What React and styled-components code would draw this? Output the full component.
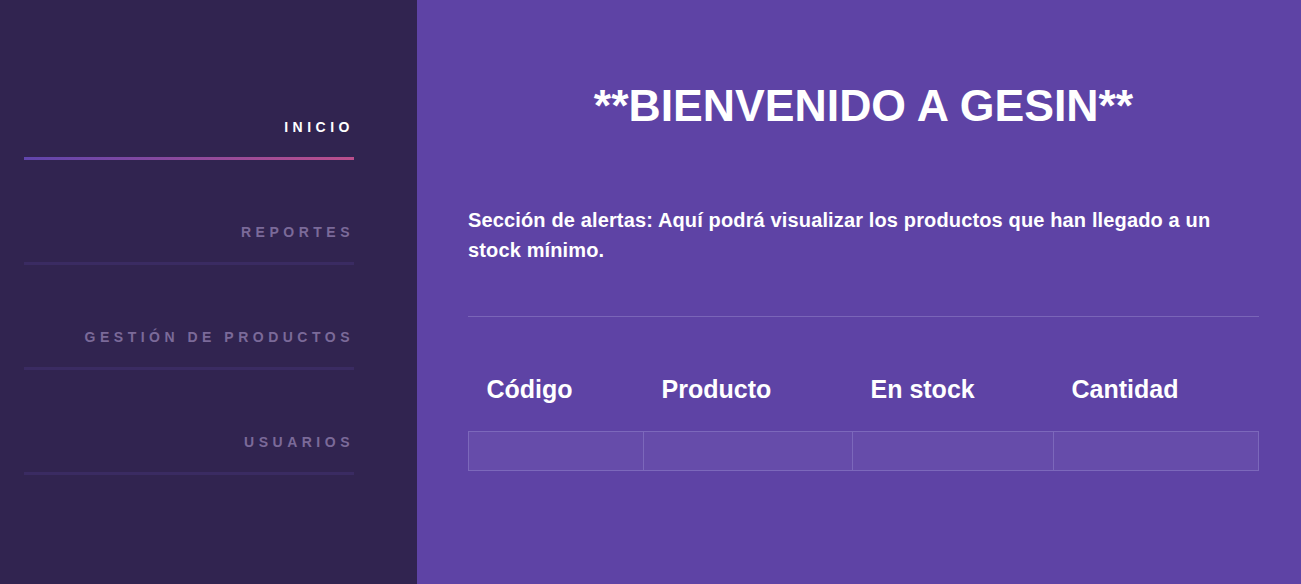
import React from "react";
import styled, { createGlobalStyle } from "styled-components";

const Global = createGlobalStyle`
  html, body { margin: 0; padding: 0; }
  body { font-family: "Liberation Sans", Arial, sans-serif; background: #5e43a5; }
  * { box-sizing: border-box; }
`;

const Layout = styled.div`
  display: flex;
  width: 100%;
  height: 584px;
`;

const Sidebar = styled.aside`
  width: 417px;
  flex: 0 0 417px;
  background: #312450;
  padding: 116px 63px 0 24px;
`;

const NavList = styled.nav`
  display: flex;
  flex-direction: column;
  gap: 61px;
`;

const NavItem = styled.a`
  display: block;
  text-align: right;
  font-size: 14px;
  line-height: 22px;
  font-weight: 700;
  letter-spacing: 4.5px;
  text-transform: uppercase;
  padding: 0 0 19px 0;
  color: ${(p) => (p.$active ? "#ffffff" : "#7b6a99")};
  border-bottom: 3px solid transparent;
  border-image: ${(p) =>
    p.$active
      ? "linear-gradient(90deg, #6045ad, #bb4f8c) 1"
      : "linear-gradient(90deg, #3a2b62, #3a2b62) 1"};
  text-decoration: none;
  cursor: pointer;
`;

const Main = styled.main`
  flex: 1;
  background: #5e43a5;
  padding: 81px 42px 0 51px;
  display: flex;
  flex-direction: column;
  color: #ffffff;
`;

const Title = styled.h1`
  margin: 0;
  text-align: center;
  font-size: 44.6px;
  line-height: 50px;
  font-weight: 700;
`;

const Intro = styled.p`
  margin: 74px 0 0 0;
  font-size: 20px;
  line-height: 30px;
  font-weight: 700;
  letter-spacing: 0.14px;
`;

const Divider = styled.hr`
  margin: 51px 0 0 0;
  border: none;
  height: 1px;
  background: #7a65b8;
`;

const Table = styled.table`
  width: 100%;
  margin-top: 38px;
  border-collapse: collapse;
`;

const HeadCell = styled.th`
  text-align: left;
  font-size: 25px;
  line-height: 29px;
  font-weight: 700;
  padding: 20px 18px 27px 18px;
  color: #ffffff;
`;

const BodyCell = styled.td`
  height: 39px;
  padding: 0 18px;
  background: #664caa;
  border: 1px solid #7c68bb;
`;

const columns = ["Código", "Producto", "En stock", "Cantidad"];
const navItems = ["Inicio", "Reportes", "Gestión de productos", "Usuarios"];

export default function App() {
  return (
    <>
      <Global />
      <Layout>
        <Sidebar>
          <NavList>
            {navItems.map((n, i) => (
              <NavItem key={n} $active={i === 0}>
                {n}
              </NavItem>
            ))}
          </NavList>
        </Sidebar>
        <Main>
          <Title>**BIENVENIDO A GESIN**</Title>
          <Intro>
            Sección de alertas: Aquí podrá visualizar los productos que han
            llegado a un stock mínimo.
          </Intro>
          <Divider />
          <Table>
            <thead>
              <tr>
                {columns.map((c) => (
                  <HeadCell key={c}>{c}</HeadCell>
                ))}
              </tr>
            </thead>
            <tbody>
              <tr>
                {columns.map((c) => (
                  <BodyCell key={c} />
                ))}
              </tr>
            </tbody>
          </Table>
        </Main>
      </Layout>
    </>
  );
}
